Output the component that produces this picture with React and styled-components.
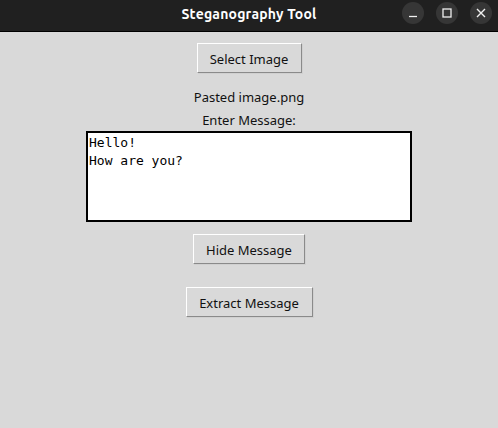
import React from "react";
import styled, { createGlobalStyle } from "styled-components";

const GlobalStyle = createGlobalStyle`
  html, body {
    margin: 0;
    padding: 0;
    background: #d9d9d9;
  }
  body {
    font-family: "Noto Sans", "Open Sans", sans-serif;
  }
`;

const App = () => {
  return (
    <>
      <GlobalStyle />
      <Window>
        <TitleBar>
          <Title>Steganography Tool</Title>
          <Controls>
            <CircleButton aria-label="minimize">
              <svg width="12" height="12" viewBox="0 0 12 12">
                <path d="M2 9.5h8" stroke="#f0f0f0" strokeWidth="1.3" />
              </svg>
            </CircleButton>
            <CircleButton aria-label="maximize">
              <svg width="12" height="12" viewBox="0 0 12 12">
                <rect x="2" y="2" width="8" height="8" fill="none" stroke="#f0f0f0" strokeWidth="1.3" />
              </svg>
            </CircleButton>
            <CircleButton aria-label="close">
              <svg width="12" height="12" viewBox="0 0 12 12">
                <path d="M2 2l8 8M10 2l-8 8" stroke="#f0f0f0" strokeWidth="1.4" />
              </svg>
            </CircleButton>
          </Controls>
        </TitleBar>
        <Content>
          <Button $width={105}>Select Image</Button>
          <Label $top={15}>Pasted image.png</Label>
          <Label $top={4}>Enter Message:</Label>
          <MessageBox defaultValue={"Hello!\nHow are you?"} spellCheck={false} />
          <Button $width={112} $top={12}>Hide Message</Button>
          <Button $width={127} $top={23}>Extract Message</Button>
        </Content>
      </Window>
    </>
  );
};

const Window = styled.div`
  width: 498px;
  height: 428px;
  background: #d9d9d9;
  display: flex;
  flex-direction: column;
`;

const TitleBar = styled.div`
  position: relative;
  height: 31px;
  background: #202020;
  border-bottom: 1px solid #000;
  display: flex;
  align-items: center;
  justify-content: center;
`;

const Title = styled.div`
  color: #ffffff;
  font-family: "Ubuntu", "Noto Sans", sans-serif;
  font-weight: 700;
  font-size: 14px;
  letter-spacing: 0.2px;
  margin-top: -3px;
`;

const Controls = styled.div`
  position: absolute;
  right: 6px;
  top: 2px;
  display: flex;
  gap: 12px;
`;

const CircleButton = styled.div`
  width: 22px;
  height: 22px;
  border-radius: 50%;
  background: #363636;
  display: flex;
  align-items: center;
  justify-content: center;
`;

const Content = styled.div`
  display: flex;
  flex-direction: column;
  align-items: center;
  padding-top: 11px;
`;

const Button = styled.div`
  box-sizing: border-box;
  width: ${(p) => p.$width}px;
  height: 30px;
  margin-top: ${(p) => p.$top || 0}px;
  padding-top: 1px;
  display: flex;
  align-items: center;
  justify-content: center;
  font-size: 13px;
  color: #111;
  background: #d9d9d9;
  border: 1px solid;
  border-color: #ffffff #8a8a8a #8a8a8a #ffffff;
  box-shadow: 1px 1px 0 #d0d0d0;
`;

const Label = styled.div`
  margin-top: ${(p) => p.$top}px;
  font-size: 13px;
  line-height: 19px;
  color: #111;
`;

const MessageBox = styled.textarea`
  box-sizing: border-box;
  width: 326px;
  height: 91px;
  margin-top: 1px;
  padding: 1px 2px 1px 1px;
  border: 2px solid #000;
  outline: none;
  resize: none;
  background: #ffffff;
  color: #000;
  font-family: "DejaVu Sans Mono", monospace;
  font-size: 13px;
  line-height: 18px;
`;

export default App;
